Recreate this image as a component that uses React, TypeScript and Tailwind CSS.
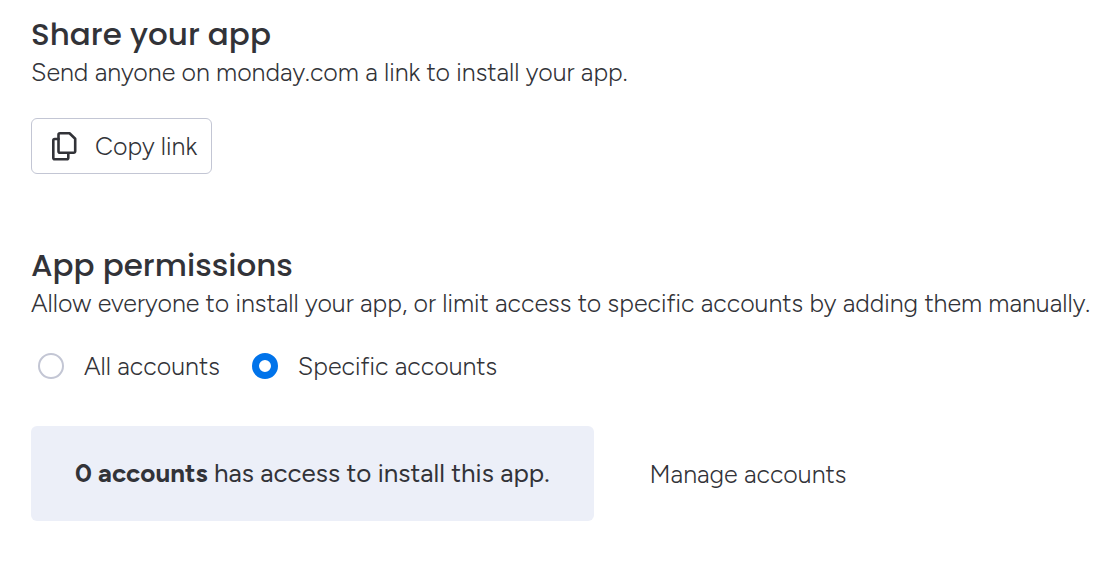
import { useState } from 'react';

const options = [
  { value: 'all', label: 'All accounts' },
  { value: 'specific', label: 'Specific accounts' },
];

function CopyIcon() {
  return (
    <svg
      width="26"
      height="30"
      viewBox="0 0 26 30"
      fill="none"
      stroke="currentColor"
      strokeWidth="2.6"
      strokeLinejoin="round"
      strokeLinecap="round"
      aria-hidden="true"
    >
      <path d="M9 2.300h9.500l5.700 5.500v12.400a1.500 1.500 0 0 1-1.500 1.500H9a1.500 1.500 0 0 1-1.500-1.500V3.800A1.500 1.500 0 0 1 9 2.300z" />
      <path d="M7.500 8H3.800a1.500 1.500 0 0 0-1.500 1.500v17.200a1.500 1.500 0 0 0 1.500 1.500h12a1.500 1.500 0 0 0 1.500-1.500v-4.500" />
    </svg>
  );
}

export default function App() {
  const [access, setAccess] = useState('specific');

  return (
    <main className="min-h-screen bg-white pt-4 pr-4 pb-14 pl-[31px] font-['Figtree','Inter',sans-serif] text-[25px] leading-8 font-light text-[#323338]">
      <section>
        <h1 className="font-['Poppins','Inter',sans-serif] text-[31px] leading-9 font-medium">Share your app</h1>
        <p className="mt-1">Send anyone on monday.com a link to install your app.</p>
        <button
          type="button"
          className="mt-[30px] flex h-14 items-center gap-[18px] rounded-md border border-[#c3c6d4] pr-3.5 pl-[19px]"
        >
          <CopyIcon />
          Copy link
        </button>
      </section>

      <section className="mt-[73px]">
        <h2 className="font-['Poppins','Inter',sans-serif] text-[31px] leading-9 font-medium">App permissions</h2>
        <p className="mt-1">
          Allow everyone to install your app, or limit access to specific accounts by adding them manually.
        </p>
        <div className="mt-[31px] flex gap-8 pl-[7px]">
          {options.map((option) => (
            <label key={option.value} className="flex items-center gap-5">
              <input
                type="radio"
                name="access"
                value={option.value}
                checked={access === option.value}
                onChange={() => setAccess(option.value)}
                className="size-[26px] appearance-none rounded-full border-2 border-[#c3c6d4] checked:border-7 checked:border-[#0073ea]"
              />
              {option.label}
            </label>
          ))}
        </div>
        <div className="mt-11 flex items-center gap-14">
          <p className="rounded-md bg-[#eceff8] px-11 py-8 text-[26px] leading-[31px] font-normal">
            <strong className="font-bold">0 accounts</strong> has access to install this app.
          </p>
          <button type="button">Manage accounts</button>
        </div>
      </section>
    </main>
  );
}
